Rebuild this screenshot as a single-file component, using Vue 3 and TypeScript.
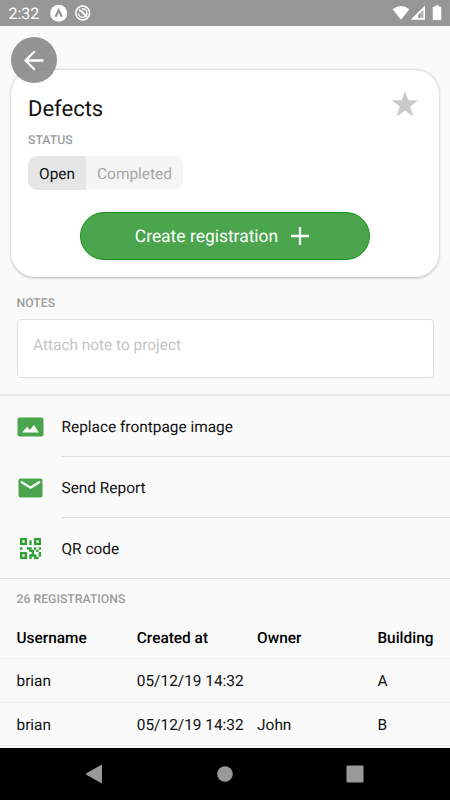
<script setup lang="ts">
import { ref } from 'vue'

interface Registration {
  username: string
  createdAt: string
  owner: string
  building: string
}

const status = ref<'Open' | 'Completed'>('Open')
const note = ref('')
const columns: string[] = ['Username', 'Created at', 'Owner', 'Building']
const registrations: Registration[] = [
  { username: 'brian', createdAt: '05/12/19 14:32', owner: '', building: 'A' },
  { username: 'brian', createdAt: '05/12/19 14:32', owner: 'John', building: 'B' },
]

// Modules of the QR icon, one string per row.
const qrRows: string[] = [
  '###...###',
  '#.#.#.#.#',
  '###.#.###',
  '.........',
  '#..##.#.#',
  '....##.#.',
  '###..#..#',
  '#.#.###.#',
  '###.#.##.',
]
const qrPath = qrRows
  .flatMap((row, y) => [...row].map((m, x) => (m === '#' ? `M${x} ${y}h1v1h-1z` : '')))
  .join('')
</script>

<template>
  <div class="screen">
    <header class="statusbar">
      <span class="clock">2:32</span>
      <svg class="notif" width="42" height="18" viewBox="0 0 42 18">
        <circle cx="8.7" cy="9.2" r="8.5" fill="#fff" />
        <path d="M5.5 12.8Q7.8 8 8.7 6.2Q9.6 8 11.9 12.8" fill="none" stroke="#8f8f8f" stroke-width="2" />
        <circle cx="32.7" cy="9" r="6.9" fill="none" stroke="#fff" stroke-width="1.5" />
        <circle cx="32.7" cy="9" r="4.3" fill="none" stroke="#fff" stroke-width="1.4" stroke-dasharray="21 6" stroke-dashoffset="8" />
        <path d="M28.8 6.2Q32 6.5 33 9L37 12.7" fill="none" stroke="#fff" stroke-width="1.9" />
      </svg>
      <svg class="signals" width="50" height="16" viewBox="0 0 50 16">
        <path d="M0.6 4.2Q9 -2 17.4 4.2L9 14.8Z" fill="#fff" />
        <path d="M33 0.5V14.8H18.6Z" fill="#fff" />
        <path d="M31.2 5.2V13.1H26.2V9.8Z" fill="#969696" />
        <path d="M31.2 5.2V13.1H28.2V8Z" fill="#b5b5b5" />
        <path d="M41 2H43.2V.8H46.8V2H49V14.8H41Z" fill="#fff" stroke="#fff" stroke-width=".5" stroke-linejoin="round" />
      </svg>
    </header>

    <main class="content">
      <button class="back" aria-label="Back">
        <svg width="24" height="24" viewBox="0 0 24 24">
          <path d="M21.6 12.5H3.6M12.8 3.3L3.6 12.5L12.8 21.7" fill="none" stroke="#fff" stroke-width="2.3" />
        </svg>
      </button>

      <section class="card">
        <div class="title-row">
          <h1>Defects</h1>
          <svg class="star" width="28" height="26" viewBox="0 0 28 26">
            <path d="M14 0L17.2 9.3H27.4L19.3 15.3L22.2 25.4L14 19.4L5.8 25.4L8.7 15.3L.6 9.3H10.8Z" fill="#cacaca" />
          </svg>
        </div>
        <div class="label">STATUS</div>
        <div class="segmented">
          <button :class="{ active: status === 'Open' }" @click="status = 'Open'">Open</button>
          <button :class="{ active: status === 'Completed' }" @click="status = 'Completed'">Completed</button>
        </div>
        <button class="create">
          <span>Create registration</span>
          <svg width="18" height="18" viewBox="0 0 18 18">
            <path d="M9 0V18M0 9H18" stroke="#fff" stroke-width="2.3" />
          </svg>
        </button>
      </section>

      <section class="notes">
        <div class="label">NOTES</div>
        <textarea v-model="note" placeholder="Attach note to project"></textarea>
      </section>

      <nav class="actions">
        <div class="action">
          <div class="icon">
            <svg width="27" height="20" viewBox="0 0 27 20">
              <rect x=".5" y=".5" width="26" height="19" rx="2" fill="#4ba54d" />
              <path d="M5.2 15.6L10 9.8L12.8 13.1L17 8L21.9 15.6Z" fill="#fff" />
            </svg>
          </div>
          <div class="text">Replace frontpage image</div>
        </div>
        <div class="action">
          <div class="icon">
            <svg width="27" height="20" viewBox="0 0 27 20">
              <rect x="1.5" y=".5" width="24" height="19" rx="2" fill="#4ba54d" />
              <path d="M4 3.8L13.5 9.8L23 3.8" fill="none" stroke="#fff" stroke-width="2.2" />
            </svg>
          </div>
          <div class="text">Send Report</div>
        </div>
        <div class="action">
          <div class="icon qr">
            <svg width="21" height="21" viewBox="0 0 9 9">
              <path :d="qrPath" fill="#2fa132" />
            </svg>
          </div>
          <div class="text">QR code</div>
        </div>
      </nav>

      <section class="registrations">
        <div class="label">26 REGISTRATIONS</div>
        <div class="row head">
          <span v-for="c in columns" :key="c">{{ c }}</span>
        </div>
        <div v-for="(r, i) in registrations" :key="i" class="row">
          <span>{{ r.username }}</span>
          <span>{{ r.createdAt }}</span>
          <span>{{ r.owner }}</span>
          <span>{{ r.building }}</span>
        </div>
      </section>
    </main>

    <footer class="navbar">
      <svg width="18" height="20" viewBox="0 0 18 20"><path d="M1 10L16.5 1.2V18.8Z" fill="#999" stroke="#999" stroke-linejoin="round" /></svg>
      <svg width="16" height="16" viewBox="0 0 16 16"><circle cx="8" cy="8" r="7.8" fill="#999" /></svg>
      <svg width="18" height="18" viewBox="0 0 18 18"><rect x=".5" y=".5" width="17" height="17" rx="1" fill="#999" /></svg>
    </footer>
  </div>
</template>

<style>
body {
  margin: 0;
}
</style>

<style scoped>
.screen {
  width: 450px;
  height: 800px;
  overflow: hidden;
  display: flex;
  flex-direction: column;
  background: #fafafa;
  color: #111;
  font-family: Roboto, "Liberation Sans", sans-serif;
  font-size: 15.42px;
  text-rendering: geometricPrecision;
}
button,
textarea {
  font: inherit;
  letter-spacing: inherit;
  text-rendering: inherit;
  border: 0;
  padding: 0;
  margin: 0;
}
svg {
  display: block;
  flex: none;
}
.statusbar {
  height: 26px;
  flex: none;
  display: flex;
  align-items: center;
  background: #969696;
  color: #fff;
  padding: 0 8px 0 8.5px;
  box-sizing: border-box;
}
.clock {
  width: 41.5px;
  font-size: 16px;
  line-height: 26px;
  padding-top: 2px;
}
.signals {
  margin-left: auto;
}
.content {
  flex: 1;
  min-height: 0;
  position: relative;
  padding-top: 44px;
}
.back {
  position: absolute;
  left: 11px;
  top: 11px;
  width: 46px;
  height: 46px;
  border-radius: 50%;
  background: rgba(125, 125, 125, 0.81);
  display: grid;
  place-items: center;
}
.card {
  height: 207px;
  margin: 0 11px;
  padding: 21px 17px 0;
  box-sizing: border-box;
  border-radius: 24px;
  background: #fff;
  box-shadow: 0 0.5px 3px rgba(0, 0, 0, 0.28);
}
.title-row {
  display: flex;
  justify-content: space-between;
  height: 42px;
}
h1 {
  margin: 0;
  font-size: 22px;
  line-height: 38px;
  font-weight: 400;
}
.star {
  margin-right: 3px;
}
.label {
  font-size: 12.25px;
  line-height: 14px;
  font-weight: 500;
  color: #9c9c9c;
}
.segmented {
  width: 155px;
  height: 34px;
  margin-top: 9px;
  display: flex;
  border-radius: 9px;
  overflow: hidden;
}
.segmented button {
  flex: 1;
  padding-top: 1px;
  background: #f5f5f5;
  color: #a5a5a5;
}
.segmented button:first-child {
  flex: 0 0 58px;
}
.segmented button.active {
  background: #e5e5e5;
  color: #111;
}
.create {
  width: 290px;
  height: 48px;
  margin: 22px auto 0;
  padding-right: 6px;
  display: flex;
  align-items: center;
  justify-content: center;
  gap: 13px;
  box-sizing: border-box;
  border: 1px solid #16951b;
  border-radius: 24px;
  background: #4ba54d;
  color: #fff;
  font-size: 17.45px;
}
.create span {
  padding-top: 2px;
}
.notes {
  height: 119px;
  box-sizing: border-box;
  padding: 19px 16.5px 0;
  border-bottom: 2px solid #e6e6e6;
}
textarea {
  display: block;
  width: 417px;
  height: 59px;
  margin-top: 9px;
  padding: 15px 15.5px;
  box-sizing: border-box;
  border: 1px solid #dedede;
  border-radius: 4px;
  background: #fff;
  resize: none;
  line-height: 20px;
  overflow: hidden;
}
textarea::placeholder {
  color: #c3c3c3;
  opacity: 1;
}
.actions {
  height: 183px;
  box-sizing: border-box;
  border-bottom: 1px solid #dedede;
}
.action {
  height: 61px;
  display: flex;
}
.icon {
  width: 61.5px;
  box-sizing: border-box;
  padding-left: 17px;
  display: flex;
  align-items: center;
}
.icon.qr {
  padding-left: 20px;
}
.text {
  flex: 1;
  box-sizing: border-box;
  border-bottom: 1px solid #dedede;
  line-height: 62px;
}
.action:last-child .text {
  border: 0;
}
.registrations .label {
  padding: 13px 16.5px 0;
}
.row {
  display: grid;
  grid-template-columns: 120.3px 120.3px 120.3px 1fr;
  height: 43.5px;
  box-sizing: border-box;
  padding-left: 16.5px;
  line-height: 44px;
  border-bottom: 1px solid #efefef;
}
.row:nth-child(odd) {
  background: #f8f8f8;
}
.row.head {
  height: 53px;
  line-height: 64px;
  font-weight: 500;
  color: #000;
}
.row:last-child {
  border-bottom-color: #e6e6e6;
}
.navbar {
  height: 52px;
  flex: none;
  display: flex;
  align-items: center;
  justify-content: space-between;
  box-sizing: border-box;
  padding: 0 86px 0 85px;
  background: #000;
}
</style>
